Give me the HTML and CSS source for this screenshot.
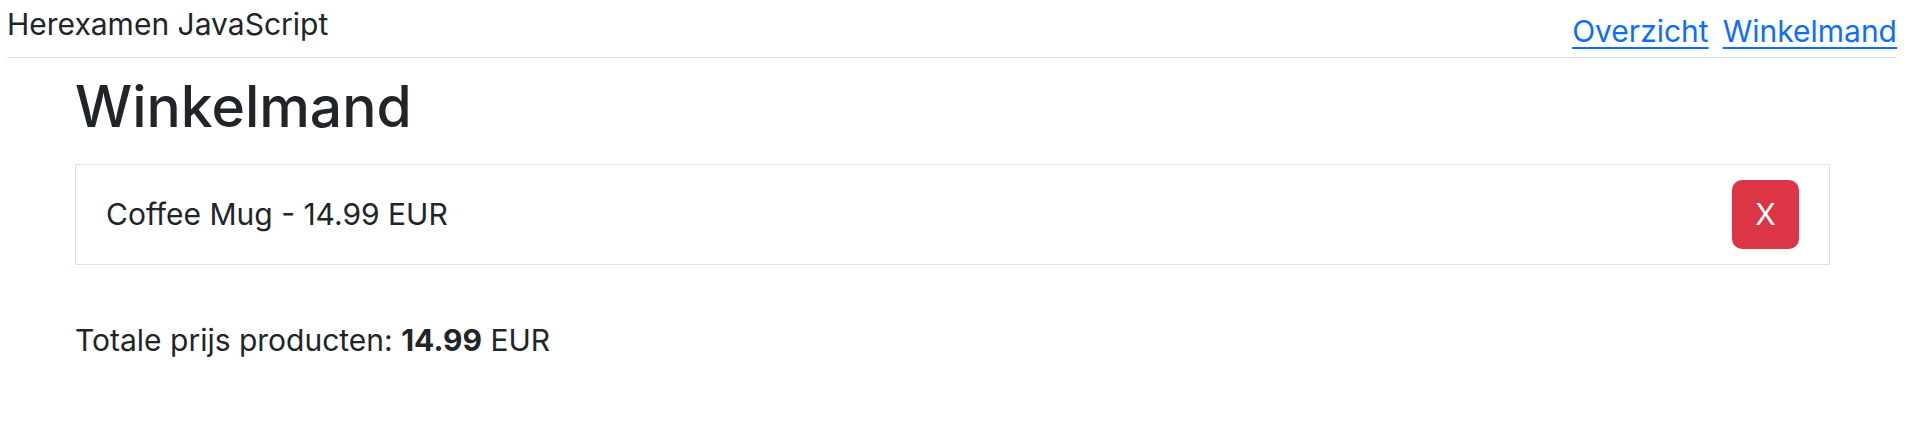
FILE: index.html
```html
<!DOCTYPE html>
<html lang="nl">
<head>
<meta charset="utf-8">
<title>Winkelmand</title>
<link rel="stylesheet" href="styles.css">
</head>
<body>
<header class="topbar">
  <div class="brand">Herexamen JavaScript</div>
  <nav class="nav">
    <a href="#" class="nav-link">Overzicht</a>
    <a href="#" class="nav-link">Winkelmand</a>
  </nav>
</header>
<main class="container">
  <h1 class="title">Winkelmand</h1>
  <ul class="cart">
    <li class="cart-item">
      <span class="item-text">Coffee Mug - 14.99 EUR</span>
      <button class="btn-remove" type="button">X</button>
    </li>
  </ul>
  <p class="total">Totale prijs producten: <strong>14.99</strong> EUR</p>
</main>
</body>
</html>
```

FILE: styles.css
```css
* { box-sizing: border-box; }
html, body { margin: 0; padding: 0; background: #fff; }
body {
  font-family: Inter, "Noto Sans", sans-serif;
  font-size: 30px;
  line-height: 1.5;
  color: #212529;
}
.topbar {
  display: flex;
  justify-content: space-between;
  align-items: flex-start;
  margin: 0 10px 0 7px;
  padding-bottom: 3px;
  border-bottom: 1px solid #dee2e6;
}
.brand { padding-top: 2px; }
.nav { display: flex; gap: 14px; margin-top: 9px; }
.nav-link {
  color: #0d6efd;
  text-decoration: underline;
  text-decoration-thickness: 2px;
  text-underline-offset: 5px;
}
.container { margin: 0 77px 0 75px; }
.title {
  font-size: 57px;
  font-weight: 500;
  line-height: 1.2;
  margin: 0 0 23px 0;
  padding-top: 15px;
}
.cart { list-style: none; margin: 0; padding: 0; }
.cart-item {
  display: flex;
  justify-content: space-between;
  align-items: center;
  border: 1px solid #dee2e6;
  padding: 15px 30px;
}
.btn-remove {
  font-family: inherit;
  font-size: 30px;
  line-height: 1.5;
  color: #fff;
  background: #dc3545;
  border: 0;
  border-radius: 10px;
  width: 67px;
  height: 69px;
  padding: 0;
}
.total { margin: 53px 0 0 0; }
.total strong { font-weight: 700; }
```
